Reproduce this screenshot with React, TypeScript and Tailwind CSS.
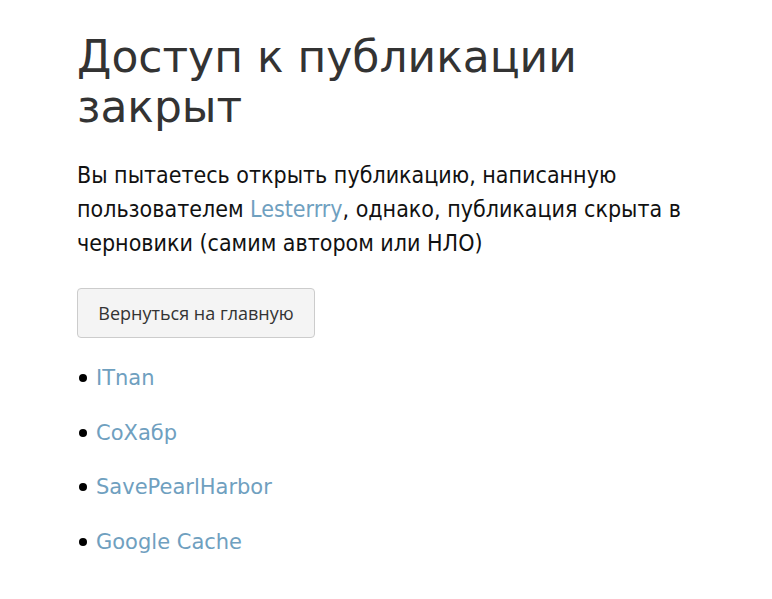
export default function App() {
  const links = ["ITnan", "СоХабр", "SavePearlHarbor", "Google Cache"];
  return (
    <div className="min-h-[599px] bg-white pl-[77px] pr-[40px] pt-[32px]">
      <h1 className="text-[44px] leading-[50px] text-[#333333] font-['DejaVu_Sans',sans-serif]">
        Доступ к публикации закрыт
      </h1>
      <p className="mt-[26px] w-[640px] text-[23px] leading-[34px] text-[#111111] font-['DejaVu_Sans_Condensed','DejaVu_Sans',sans-serif]">
        Вы пытаетесь открыть публикацию, написанную пользователем{" "}
        <a className="text-[#6fa0bf]">Lesterrry</a>, однако, публикация скрыта в черновики (самим автором или НЛО)
      </p>
      <button className="mt-[28px] h-[50px] w-[238px] rounded-[4px] border border-[#cccccc] bg-[#f4f4f4] text-[18px] text-[#333333] font-['Open_Sans',sans-serif]">
        Вернуться на главную
      </button>
      <ul className="mt-[28px] flex flex-col gap-[30px] font-['DejaVu_Sans',sans-serif] text-[21px] leading-[24.5px]">
        {links.map((l) => (
          <li key={l} className="flex items-center gap-[9px] pl-[2px]">
            <span className="h-[8px] w-[8px] rounded-full bg-black" />
            <a className="text-[#6fa0bf]">{l}</a>
          </li>
        ))}
      </ul>
    </div>
  );
}
